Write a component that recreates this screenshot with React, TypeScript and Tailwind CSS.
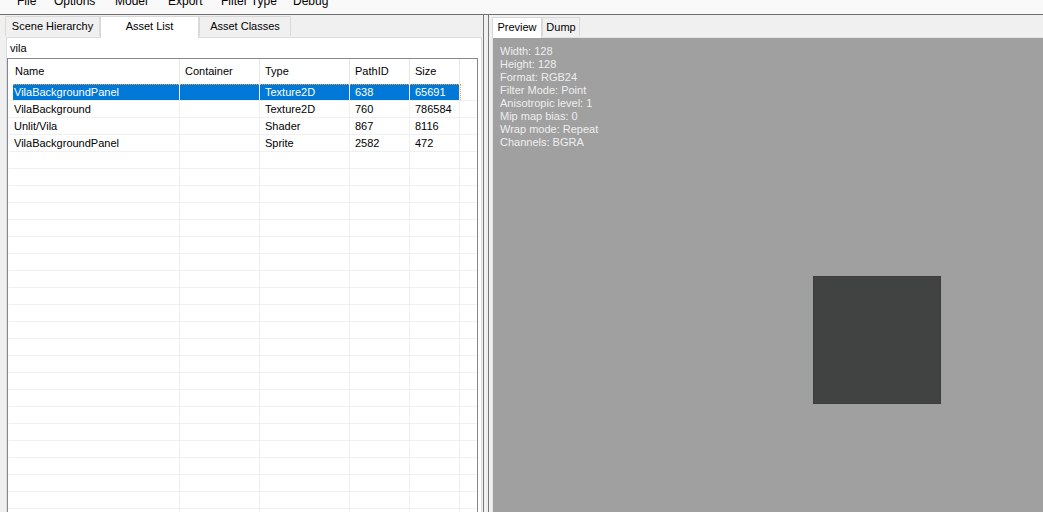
import React from 'react';

const menuItems = [
    { label: 'File', w: 'w-[37px]' },
    { label: 'Options', w: 'w-[61px]' },
    { label: 'Model', w: 'w-[53px]' },
    { label: 'Export', w: 'w-[53px]' },
    { label: 'Filter Type', w: 'w-[72px]' },
    { label: 'Debug', w: 'w-[60px]' },
];

const assets = [
    { name: 'VilaBackgroundPanel', container: '', type: 'Texture2D', pathId: '638', size: '65691' },
    { name: 'VilaBackground', container: '', type: 'Texture2D', pathId: '760', size: '786584' },
    { name: 'Unlit/Vila', container: '', type: 'Shader', pathId: '867', size: '8116' },
    { name: 'VilaBackgroundPanel', container: '', type: 'Sprite', pathId: '2582', size: '472' },
];

const info = [
    'Width: 128',
    'Height: 128',
    'Format: RGB24',
    'Filter Mode: Point',
    'Anisotropic level: 1',
    'Mip map bias: 0',
    'Wrap mode: Repeat',
    'Channels: BGRA',
];

const emptyRows = Array.from({ length: 24 });

const App = () => {
    return (
        <div className="w-[1043px] h-[512px] overflow-hidden bg-[#f0f0f0] flex flex-col text-black font-['Liberation_Sans',Arial,sans-serif] text-[11px]">
            {/* Menu strip, scrolled so only the bottom half shows */}
            <div className="h-[15px] shrink-0 bg-[#f9f9f9] border-b border-[#6f6f6f] overflow-hidden">
                <div className="flex pl-[17px] -mt-[9px] text-[12px] leading-[20px]">
                    {menuItems.map((m) => (
                        <span key={m.label} className={`${m.w} shrink-0 whitespace-nowrap`}>
                            {m.label}
                        </span>
                    ))}
                </div>
            </div>

            <div className="flex-1 flex min-h-0">
                {/* Left panel */}
                <div className="w-[484px] shrink-0 flex flex-col border-r border-[#7a7a7a]">
                    <div className="h-[22px] shrink-0 flex items-end pl-[5px]">
                        <div className="w-[95px] h-[20px] mb-[1px] flex items-center justify-center bg-[#f0f0f0] border border-[#d9d9d9] border-b-0">
                            Scene Hierarchy
                        </div>
                        <div className="w-[99px] h-[22px] flex items-center justify-center pb-[2px] bg-white border border-[#d9d9d9] border-b-0 -mb-[1px] relative z-10">
                            Asset List
                        </div>
                        <div className="w-[92px] h-[20px] mb-[1px] flex items-center justify-center bg-[#f0f0f0] border border-[#d9d9d9] border-b-0">
                            Asset Classes
                        </div>
                    </div>

                    <div className="flex-1 min-h-0 ml-[6px] w-[476px] bg-white border border-b-0 border-[#dcdcdc] pr-[3px] flex flex-col">
                        <div className="h-[20px] shrink-0 flex items-center pl-[3px] bg-white">vila</div>

                        <div className="flex-1 min-h-0 border border-b-0 border-[#828790] pl-[1px] overflow-hidden">
                            {/* Header */}
                            <div className="h-[25px] flex items-center">
                                <div className="w-[171px] h-full flex items-center pl-[6px] border-r border-[#e5e5e5]">Name</div>
                                <div className="w-[80px] h-full flex items-center pl-[5px] border-r border-[#e5e5e5]">Container</div>
                                <div className="w-[90px] h-full flex items-center pl-[5px] border-r border-[#e5e5e5]">Type</div>
                                <div className="w-[60px] h-full flex items-center pl-[5px] border-r border-[#e5e5e5]">PathID</div>
                                <div className="w-[50px] h-full flex items-center pl-[5px] border-r border-[#e5e5e5]">Size</div>
                                <div className="flex-1" />
                            </div>

                            {/* Rows */}
                            {assets.map((a, i) => {
                                const sel = i === 0;
                                const cell = sel ? 'bg-[#0078d7] text-white' : '';
                                return (
                                    <div key={i} className="h-[17px] flex border-b border-[#f0f0f0] relative">
                                        <div className="w-[4px] shrink-0" />
                                        <div className={`w-[167px] shrink-0 pl-[1px] border-r border-[#f0f0f0] leading-[16px] whitespace-nowrap ${cell}`}>
                                            {a.name}
                                        </div>
                                        <div className={`w-[80px] shrink-0 pl-[5px] border-r border-[#f0f0f0] leading-[16px] ${cell}`}>
                                            {a.container}
                                        </div>
                                        <div className={`w-[90px] shrink-0 pl-[5px] border-r border-[#f0f0f0] leading-[16px] ${cell}`}>
                                            {a.type}
                                        </div>
                                        <div className={`w-[60px] shrink-0 pl-[5px] border-r border-[#f0f0f0] leading-[16px] ${cell}`}>
                                            {a.pathId}
                                        </div>
                                        <div className={`w-[50px] shrink-0 pl-[5px] border-r border-[#f0f0f0] leading-[16px] ${cell}`}>
                                            {a.size}
                                        </div>
                                        <div className="flex-1" />
                                        {sel && (
                                            <div className="absolute left-[4px] top-0 w-[448px] h-[16px] border-t border-r border-dotted border-[#f2a23c]" />
                                        )}
                                    </div>
                                );
                            })}
                            {emptyRows.map((_, i) => (
                                <div key={`e${i}`} className="h-[17px] flex border-b border-[#f0f0f0]">
                                    <div className="w-[171px] shrink-0 border-r border-[#f0f0f0]" />
                                    <div className="w-[80px] shrink-0 border-r border-[#f0f0f0]" />
                                    <div className="w-[90px] shrink-0 border-r border-[#f0f0f0]" />
                                    <div className="w-[60px] shrink-0 border-r border-[#f0f0f0]" />
                                    <div className="w-[50px] shrink-0 border-r border-[#f0f0f0]" />
                                    <div className="flex-1" />
                                </div>
                            ))}
                        </div>
                    </div>
                </div>

                {/* Splitter gap */}
                <div className="w-[4px] shrink-0" />

                {/* Right panel */}
                <div className="flex-1 min-w-0 flex flex-col border-l border-[#7a7a7a] pl-[3px]">
                    <div className="h-[22px] shrink-0 flex items-end">
                        <div className="w-[50px] h-[21px] flex items-center justify-center pb-[2px] bg-white border border-[#d9d9d9] border-b-0 -mb-[1px] relative z-10">
                            Preview
                        </div>
                        <div className="w-[38px] h-[19px] mb-[1px] flex items-center justify-center bg-[#f0f0f0] border border-[#d9d9d9] border-b-0">
                            Dump
                        </div>
                    </div>
                    <div className="flex-1 min-h-0 border-t border-l border-[#e3e3e3] flex">
                        <div className="flex-1 relative bg-[#a0a0a0] pt-[7px] pl-[7px] text-[#eeeeee] leading-[13px]">
                            {info.map((line) => (
                                <div key={line}>{line}</div>
                            ))}
                            <div className="absolute left-[320px] top-[238px] w-[128px] h-[128px] bg-[#414342] border border-[#3b3d3c]" />
                        </div>
                    </div>
                </div>
            </div>
        </div>
    );
};

export default App;
